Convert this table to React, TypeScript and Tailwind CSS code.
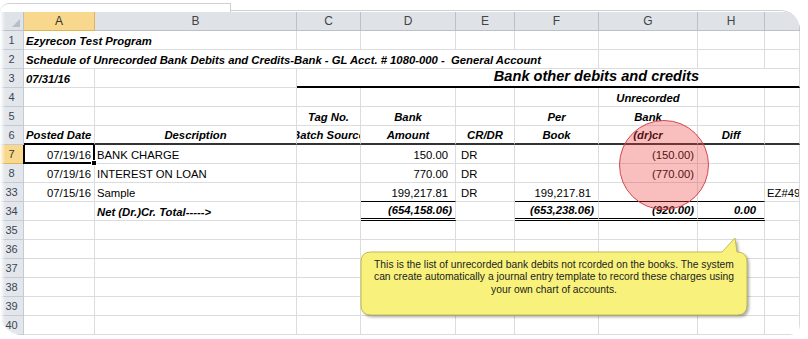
import React from "react";

const GRID =
  "grid grid-cols-[24px_71px_202px_64px_95px_59px_84px_99px_67px_35px]";
const SPAN: Record<number, string> = {
  1: "",
  2: "col-span-2",
  3: "col-span-3",
  4: "col-span-4",
  5: "col-span-5",
  6: "col-span-6",
  7: "col-span-7",
};
const BB = "border-b border-b-[#dadcdd]";
const BI = "font-bold italic";

function Cell({
  span = 1,
  cls = "",
  bb = BB,
  children,
}: {
  span?: number;
  cls?: string;
  bb?: string;
  children?: React.ReactNode;
}) {
  return (
    <div
      className={`${SPAN[span]} h-[19px] flex items-end pb-[1px] overflow-hidden whitespace-nowrap border-r border-r-[#dadcdd] ${bb} ${cls}`}
    >
      {children}
    </div>
  );
}

function Num({ n, sel = false }: { n: string; sel?: boolean }) {
  return (
    <div
      className={`h-[19px] flex items-center justify-center border-r border-b text-[11px] ${
        sel
          ? "bg-[#f8d88c] border-[#dfb35a] text-[#333]"
          : "bg-[#e3e7ec] border-[#c4cbd4] text-[#3a4656]"
      }`}
    >
      {n}
    </div>
  );
}

function Head({ l, sel = false }: { l?: string; sel?: boolean }) {
  return (
    <div
      className={`h-[19px] flex items-center justify-center border-r border-b text-[12px] ${
        sel
          ? "bg-[#f8d88c] border-[#dfb35a] text-[#333]"
          : "bg-[#dfe3e8] border-[#bac1ca] text-[#444]"
      }`}
    >
      {l}
    </div>
  );
}

function Empty({ n }: { n: number }) {
  return (
    <>
      {Array.from({ length: n }).map((_, i) => (
        <Cell key={i} />
      ))}
    </>
  );
}

const TOT = "border-b-[3px] border-double border-b-black";
const TOPB = "border-b border-b-black";

export default function App() {
  return (
    <div className="w-[808px] h-[339px] bg-white relative overflow-hidden font-['Liberation_Sans',Arial,sans-serif] text-[11.3px] leading-[13px] text-black">
      <div className="w-[800px] pt-[3px] flex flex-col">
        <div className="relative z-10 w-[231px] h-[9px] bg-white border-t border-r border-[#cdd0d4] rounded-tl-[24px]" />
        <div className="-mt-[2px] h-[325px] border-t border-[#cdd0d4] rounded-tr-[20px] rounded-bl-[22px] rounded-br-[10px] overflow-hidden pt-[1px]">
          {/* header */}
          <div className={GRID}>
            <div className="h-[19px] bg-[#dfe3e8] border-r border-b border-[#bac1ca] flex items-end justify-end pr-[3px] pb-[3px]">
              <svg width="8" height="8" viewBox="0 0 8 8">
                <polygon points="8,0 8,8 0,8" fill="#b7bec7" />
              </svg>
            </div>
            <Head l="A" sel />
            <Head l="B" />
            <Head l="C" />
            <Head l="D" />
            <Head l="E" />
            <Head l="F" />
            <Head l="G" />
            <Head l="H" />
            <Head />
          </div>
          {/* row 1 */}
          <div className={GRID}>
            <Num n="1" />
            <Cell span={2} cls={`${BI} pl-[2px]`}>
              Ezyrecon Test Program
            </Cell>
            <Empty n={7} />
          </div>
          {/* row 2 */}
          <div className={GRID}>
            <Num n="2" />
            <Cell span={6} cls={`${BI} pl-[2px]`}>
              Schedule of Unrecorded Bank Debits and Credits-Bank - GL Acct. #
              1080-000 -&nbsp; General Account
            </Cell>
            <Empty n={3} />
          </div>
          {/* row 3 */}
          <div className={GRID}>
            <Num n="3" />
            <Cell cls={`${BI} pl-[2px]`}>07/31/16</Cell>
            <Cell />
            <Cell
              span={7}
              bb="border-b-2 border-b-black"
              cls={`${BI} justify-end pr-[100px] text-[14.6px] leading-[17px] pb-[0px]`}
            >
              Bank other debits and credits
            </Cell>
          </div>
          {/* row 4 */}
          <div className={GRID}>
            <Num n="4" />
            <Empty n={6} />
            <Cell cls={`${BI} justify-center`}>Unrecorded</Cell>
            <Empty n={2} />
          </div>
          {/* row 5 */}
          <div className={GRID}>
            <Num n="5" />
            <Empty n={2} />
            <Cell cls={`${BI} justify-center`}>Tag No.</Cell>
            <Cell cls={`${BI} justify-center`}>Bank</Cell>
            <Cell />
            <Cell cls={`${BI} justify-center`}>Per</Cell>
            <Cell cls={`${BI} justify-center`}>Bank</Cell>
            <Empty n={2} />
          </div>
          {/* row 6 */}
          <div className={GRID}>
            <Num n="6" />
            <Cell cls={`${BI} pl-[2px]`} bb="border-b-2 border-b-black">
              Posted Date
            </Cell>
            <Cell cls={`${BI} justify-center`} bb="border-b-2 border-b-[#333]">
              Description
            </Cell>
            <Cell cls={`${BI} justify-center`} bb="border-b-2 border-b-[#333]">
              Batch Source
            </Cell>
            <Cell cls={`${BI} justify-center`} bb="border-b-2 border-b-[#333]">
              Amount
            </Cell>
            <Cell cls={`${BI} justify-center`} bb="border-b-2 border-b-[#333]">
              CR/DR
            </Cell>
            <Cell cls={`${BI} justify-center`} bb="border-b-2 border-b-[#333]">
              Book
            </Cell>
            <Cell cls={`${BI} justify-center`} bb="border-b-2 border-b-[#333]">
              (dr)cr
            </Cell>
            <Cell cls={`${BI} justify-center`} bb="border-b-2 border-b-[#333]">
              Diff
            </Cell>
            <Cell bb="border-b-2 border-b-[#333]" />
          </div>
          {/* row 7 */}
          <div className={GRID}>
            <Num n="7" sel />
            <div className="relative h-[19px] flex items-end pb-[0px] justify-end pr-[2px] border-l-2 border-r-2 border-b-2 border-black -ml-[1px] whitespace-nowrap">
              07/19/16
              <div className="absolute z-10 -right-[4px] -bottom-[4px] w-[6px] h-[6px] bg-black border border-white" />
            </div>
            <Cell cls="pl-[2px]">BANK CHARGE</Cell>
            <Cell />
            <Cell cls="justify-end pr-[7px]">150.00</Cell>
            <Cell cls="pl-[5px]">DR</Cell>
            <Cell />
            <Cell cls="justify-end pr-[3px]">(150.00)</Cell>
            <Empty n={2} />
          </div>
          {/* row 8 */}
          <div className={GRID}>
            <Num n="8" />
            <Cell cls="justify-end pr-[3px]">07/19/16</Cell>
            <Cell cls="pl-[2px]">INTEREST ON LOAN</Cell>
            <Cell />
            <Cell cls="justify-end pr-[7px]">770.00</Cell>
            <Cell cls="pl-[5px]">DR</Cell>
            <Cell />
            <Cell cls="justify-end pr-[3px]">(770.00)</Cell>
            <Empty n={2} />
          </div>
          {/* row 33 */}
          <div className={GRID}>
            <Num n="33" />
            <Cell cls="justify-end pr-[3px]">07/15/16</Cell>
            <Cell cls="pl-[2px]">Sample</Cell>
            <Cell />
            <Cell cls="justify-end pr-[7px]" bb={TOPB}>
              199,217.81
            </Cell>
            <Cell cls="pl-[5px]">DR</Cell>
            <Cell cls="justify-end pr-[7px]" bb={TOPB}>
              199,217.81
            </Cell>
            <Cell bb={TOPB} />
            <Cell bb={TOPB} />
            <Cell cls="pl-[2px]">EZ#4958</Cell>
          </div>
          {/* row 34 */}
          <div className={GRID}>
            <Num n="34" />
            <Cell />
            <Cell cls={`${BI} pl-[2px]`}>Net (Dr.)Cr. Total-----&gt;</Cell>
            <Cell />
            <Cell cls={`${BI} justify-end pr-[3px] pb-[0px]`} bb={TOT}>
              (654,158.06)
            </Cell>
            <Cell />
            <Cell cls={`${BI} justify-end pr-[4px] pb-[0px]`} bb={TOT}>
              (653,238.06)
            </Cell>
            <Cell cls={`${BI} justify-end pr-[3px] pb-[0px]`} bb={TOT}>
              (920.00)
            </Cell>
            <Cell cls={`${BI} justify-end pr-[8px] pb-[0px]`} bb={TOT}>
              0.00
            </Cell>
            <Cell />
          </div>
          {["35", "36", "37", "38", "39", "40"].map((n) => (
            <div key={n} className={GRID}>
              <Num n={n} />
              <Empty n={9} />
            </div>
          ))}
        </div>
      </div>

      {/* left fade */}
      <div className="absolute left-0 top-0 h-full w-[5px] bg-[linear-gradient(to_right,white,rgba(255,255,255,0))]" />

      {/* red highlight circle */}
      <div className="absolute left-[619px] top-[120px] w-[90px] h-[90px] rounded-full bg-[rgba(236,62,62,0.33)] border border-[#d5474d]" />

      {/* callout */}
      <svg
        className="absolute left-[356px] top-[232px]"
        width="400"
        height="92"
        viewBox="0 0 400 92"
      >
        <defs>
          <filter id="sh" x="-10%" y="-10%" width="120%" height="130%">
            <feGaussianBlur stdDeviation="1.5" />
          </filter>
        </defs>
        <path
          d="M 15 20 H 366 L 379 6 L 381 20 Q 391 20 391 30 V 73 Q 391 83 381 83 H 15 Q 5 83 5 73 V 30 Q 5 20 15 20 Z"
          transform="translate(2 2)"
          fill="rgba(0,0,0,0.35)"
          filter="url(#sh)"
        />
        <path
          d="M 15 20 H 366 L 379 6 L 381 20 Q 391 20 391 30 V 73 Q 391 83 381 83 H 15 Q 5 83 5 73 V 30 Q 5 20 15 20 Z"
          fill="#f8f27c"
          stroke="#c2b95a"
          strokeWidth="1"
        />
      </svg>
      <div className="absolute left-[361px] top-[259px] w-[386px] text-center text-[10.3px] leading-[12.3px] text-[#1c1c1c]">
        This is the list of unrecorded bank debits not rcorded on the books. The
        system
        <br />
        can create automatically a journal entry template to record these
        charges using
        <br />
        your own chart of accounts.
      </div>
    </div>
  );
}
